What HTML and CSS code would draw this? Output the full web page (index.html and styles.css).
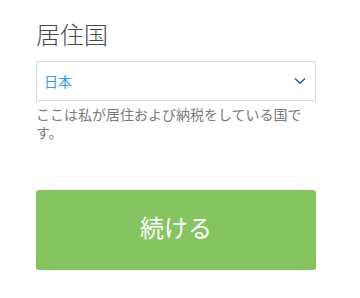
FILE: index.html
```html
<!DOCTYPE html>
<html lang="ja">
<head>
<meta charset="utf-8">
<link rel="stylesheet" href="styles.css">
</head>
<body>
<div class="page">
  <h1 class="title">居住国</h1>
  <div class="select">
    <span class="select-value">日本</span>
    <svg class="chevron" width="12" height="8" viewBox="0 0 12 8"><path d="M1 1.5 L6 6.2 L11 1.5" fill="none" stroke="#1f5f93" stroke-width="1.5"/></svg>
  </div>
  <p class="help">ここは私が居住および納税をしている国です。</p>
  <button class="continue">続ける</button>
</div>
</body>
</html>
```
FILE: styles.css
```css
html, body {
  margin: 0;
  padding: 0;
  background: #ffffff;
}
body {
  font-family: "Noto Sans CJK JP", "Noto Sans", sans-serif;
}
.page {
  padding: 18px 44px 0 36px;
  width: 280px;
}
.title {
  margin: 0;
  font-size: 24px;
  line-height: 32px;
  font-weight: 300;
  color: #4a4a4a;
}
.select {
  margin-top: 11px;
  height: 40px;
  box-sizing: border-box;
  border: 1px solid #d4dce2;
  display: flex;
  align-items: center;
  justify-content: space-between;
  padding: 0 9px 0 7px;
}
.select-value {
  font-size: 14px;
  color: #3b9ad7;
  line-height: 20px;
}
.chevron {
  display: block;
}
.help {
  margin: 4px 0 0 0;
  padding-right: 2px;
  font-size: 14px;
  line-height: 18px;
  color: #7a7a7a;
}
.continue {
  display: flex;
  align-items: center;
  justify-content: center;
  margin-top: 49px;
  width: 280px;
  height: 80px;
  border: none;
  border-radius: 3px;
  background: #86c462;
  color: #ffffff;
  font-family: "Noto Sans CJK JP", "Noto Sans", sans-serif;
  font-size: 24px;
  padding: 0 0 7px 0;
}
```
